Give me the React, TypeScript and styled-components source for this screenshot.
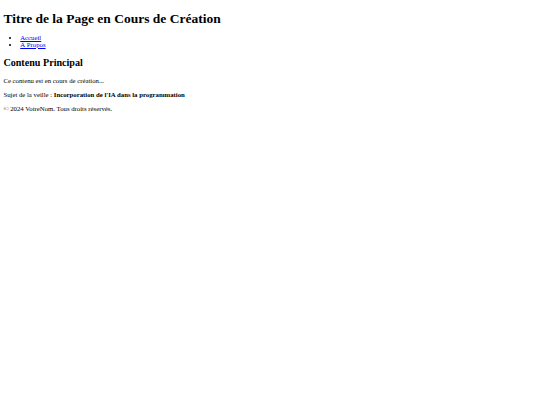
import React from 'react';
import styled, { createGlobalStyle } from 'styled-components';

// The reference is a 1280px-wide page shown at 540px: every default
// size below is the browser default times 0.421875.
const GlobalStyle = createGlobalStyle`
  html, body {
    background: #ffffff;
  }
  body {
    margin: 1.5px 3.375px 3.375px;
    color: #000000;
    font-family: "Liberation Serif", "Times New Roman", serif;
    font-size: 6.75px;
  }
`;

const Title = styled.h1`
  font-size: 13.5px;
  font-weight: bold;
  margin: 9px 0 7px;
`;

const NavList = styled.ul`
  margin: 6.75px 0;
  padding-left: 16.875px;
  list-style: disc;
`;

const NavLink = styled.a`
  color: #0000ee;
  text-decoration: underline;
`;

const SectionTitle = styled.h2`
  font-size: 10.125px;
  font-weight: bold;
  margin: 9.5px 0 9.4px;
`;

const Paragraph = styled.p`
  margin: 6.75px 0;
`;

const links = [
  { label: 'Accueil', href: '#accueil' },
  { label: 'À Propos', href: '#a-propos' },
];

const App = () => {
  return (
    <>
      <GlobalStyle />
      <header>
        <Title>Titre de la Page en Cours de Création</Title>
        <nav>
          <NavList>
            {links.map((link) => (
              <li key={link.href}>
                <NavLink href={link.href}>{link.label}</NavLink>
              </li>
            ))}
          </NavList>
        </nav>
      </header>
      <main>
        <SectionTitle>Contenu Principal</SectionTitle>
        <Paragraph>Ce contenu est en cours de création...</Paragraph>
        <Paragraph>
          Sujet de la veille : <strong>Incorporation de l'IA dans la programmation</strong>
        </Paragraph>
      </main>
      <footer>
        <Paragraph>© 2024 VotreNom. Tous droits réservés.</Paragraph>
      </footer>
    </>
  );
};

export default App;
